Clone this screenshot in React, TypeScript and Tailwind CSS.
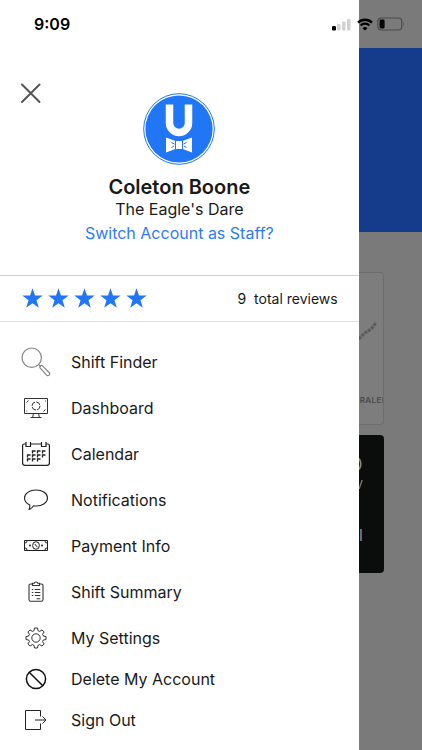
import type { ReactNode } from "react";

interface MenuItem {
    label: string;
    icon: ReactNode;
    compact?: boolean;
}

const SearchIcon = () => (
    <svg width="30" height="30" viewBox="0 0 30 30" fill="none" stroke="#858585" strokeWidth="1.2">
        <circle cx="10.7" cy="10.7" r="9.7" />
        <path d="M17.6 17.6l2.2 2.2" />
        <path d="M19.3 21.2a1.6 1.6 0 0 1 2.2-2.3l6.6 6.6a1.8 1.8 0 0 1-2.5 2.6z" />
    </svg>
);

const MonitorIcon = () => (
    <svg width="30" height="30" viewBox="0 0 30 30" fill="none" stroke="#333" strokeWidth="1">
        <path d="M3.5 5.5h23v15h-23z" />
        <path d="M12.5 20.5l-.8 3.5M17.5 20.5l.8 3.5M9.5 24.5h11" />
        <circle cx="15" cy="13" r="4" strokeDasharray="5 1.2" />
        <path d="M5.5 9.5l2-2M22.5 18.5l2-2" />
        <path d="M24 8h.8M5.5 18h.8" />
    </svg>
);

const CalendarIcon = () => (
    <svg width="30" height="30" viewBox="0 0 30 30" fill="none" stroke="#222" strokeWidth="1.2">
        <path d="M5 5H3.3Q1.6 5 1.6 6.8V24q0 2.4 2.4 2.4h22q2.4 0 2.4-2.4V6.8Q28.4 5 26.7 5H25M10 5h10" />
        <path d="M5 3v4.5h4.5V3M20.5 3v4.5H25V3" />
        <path d="M11.5 14.5v-2.500h3M16.5 14.5v-2.500h3M21.5 14.5v-2.500h3" strokeWidth="1.3" />
        <path d="M6.5 18.5v-2.500h3M11.5 18.5v-2.500h3M16.5 18.5v-2.500h3M21.5 18.5v-2.500h3" strokeWidth="1.3" />
        <path d="M6.5 22.5v-2.500h3M11.5 22.5v-2.500h3M16.5 22.5v-2.500h3" strokeWidth="1.3" />
    </svg>
);

const BubbleIcon = () => (
    <svg width="30" height="30" viewBox="0 0 30 30" fill="none" stroke="#222" strokeWidth="1.1" strokeLinejoin="round">
        <path d="M15 5C8.5 5 3.5 8.6 3.5 13c0 3 2 5.5 5.3 6.9.2 1.8-.1 3.3-.8 4.6 2-.7 3.6-2 4.6-3.7.8.1 1.6.2 2.4.2 6.5 0 11.5-3.5 11.5-8S21.5 5 15 5z" />
    </svg>
);

const BanknoteIcon = () => (
    <svg width="30" height="30" viewBox="0 0 30 30" fill="none" stroke="#222" strokeWidth="1">
        <path d="M3.5 9.5h23v10h-23z" />
        <path d="M4 12q2 0 2-2M4 17q2 0 2 2M26 12q-2 0-2-2M26 17q-2 0-2 2" />
        <ellipse cx="15" cy="14.5" rx="3.4" ry="3.8" />
        <path d="M13.8 13l2.6 3.2" />
        <circle cx="9" cy="14.5" r="1" fill="#222" stroke="none" />
        <circle cx="21" cy="14.5" r="1" fill="#222" stroke="none" />
    </svg>
);

const ClipboardIcon = () => (
    <svg width="30" height="30" viewBox="0 0 30 30" fill="none" stroke="#333" strokeWidth="1.1">
        <path d="M11 7H9.5Q8 7 8 8.5v14q0 1.8 1.6 1.8h10.8q1.6 0 1.6-1.8v-14Q22 7 20.5 7H19" />
        <path d="M11.5 8.5V6.3h1.7Q13.5 5 15 5t1.8 1.3h1.7v2.2z" />
        <path d="M10.8 12.5h1.5M10.8 15.5h1.5M10.8 18.5h1.5M13.8 12.5h5.5M13.8 15.5h5.5M13.8 18.5h5.5M15.5 21.7h3.8" />
    </svg>
);

const GearIcon = () => (
    <svg width="30" height="30" viewBox="0 0 30 30" fill="none" stroke="#333" strokeWidth="1" strokeLinejoin="round">
        <circle cx="15" cy="15" r="4.2" />
        <path d="M13.5 5h3l.5 2.7 1.7.7L21 6.9 23.1 9l-1.5 2.3.7 1.7 2.7.5v3l-2.7.5-.7 1.7 1.5 2.3-2.1 2.1-2.3-1.5-1.7.7-.5 2.7h-3l-.5-2.7-1.7-.7L9 23.1 6.9 21l1.5-2.3-.7-1.7L5 16.5v-3l2.7-.5.7-1.7L6.9 9 9 6.9l2.3 1.5 1.7-.7z" />
    </svg>
);

const BanIcon = () => (
    <svg width="30" height="30" viewBox="0 0 30 30" fill="none" stroke="#111" strokeWidth="1.5">
        <circle cx="15" cy="15" r="9.6" />
        <path d="M8.2 8.2l13.6 13.6" />
    </svg>
);

const SignOutIcon = () => (
    <svg width="30" height="30" viewBox="0 0 30 30" fill="none" stroke="#222" strokeWidth="1">
        <path d="M19.5 11.5v-6h-15v19h15v-6" />
        <path d="M14 15h11M21.5 11.5L25 15l-3.5 3.5" />
    </svg>
);

const menuItems: MenuItem[] = [
    { label: "Shift Finder", icon: <SearchIcon /> },
    { label: "Dashboard", icon: <MonitorIcon /> },
    { label: "Calendar", icon: <CalendarIcon /> },
    { label: "Notifications", icon: <BubbleIcon /> },
    { label: "Payment Info", icon: <BanknoteIcon /> },
    { label: "Shift Summary", icon: <ClipboardIcon /> },
    { label: "My Settings", icon: <GearIcon /> },
    { label: "Delete My Account", icon: <BanIcon />, compact: true },
    { label: "Sign Out", icon: <SignOutIcon /> },
];

const StatusBar = () => (
    <div className="absolute inset-x-0 top-0 z-10 flex h-12 items-center justify-between pr-4 pl-[34px]">
        <span className="text-base font-semibold text-black">9:09</span>
        <div className="flex items-center gap-1">
            <svg width="21" height="14" viewBox="0 0 21 14">
                <rect x="0" y="9" width="4" height="4.5" rx="1.2" fill="#000" />
                <rect x="5" y="7" width="3.5" height="6.5" rx="1" fill="#d2d2d2" />
                <rect x="10" y="4.5" width="3.5" height="9" rx="1" fill="#d2d2d2" />
                <rect x="15" y="2" width="3.5" height="11.5" rx="1" fill="#d2d2d2" />
            </svg>
            <svg width="16" height="13" viewBox="0 0 16 13" fill="none" stroke="#000" strokeWidth="2.3">
                <path d="M1 4.6a10 10 0 0 1 14 0" />
                <path d="M3.6 7.5a6.3 6.3 0 0 1 8.8 0" />
                <path d="M8 12.6L5.6 10.2a3.4 3.4 0 0 1 4.8 0z" fill="#000" stroke="none" />
            </svg>
            <svg width="29" height="14" viewBox="0 0 29 14">
                <rect x="0.8" y="1" width="24" height="12" rx="3.5" fill="none" stroke="#4b4b4b" strokeWidth="1.2" />
                <rect x="2.6" y="2.6" width="5" height="8.8" rx="1.4" fill="#000" />
                <path d="M26.2 5q1.6 2 0 4z" fill="#4b4b4b" />
            </svg>
        </div>
    </div>
);

const Logo = () => (
    <svg width="72" height="72" viewBox="0 0 72 72">
        <circle cx="36" cy="36" r="35.3" fill="#fff" stroke="#2176f5" strokeWidth="1" />
        <circle cx="36" cy="36" r="33.6" fill="#2176f5" />
        <path d="M26.5 11.5v18.5a9.5 9.5 0 0 0 19 0v-18.5" fill="none" stroke="#fff" strokeWidth="7.5" />
        <path d="M23 44.5l9.5 3.5h7l9.5-3.5v15l-9.5-3.5h-7l-9.5 3.5z" fill="#fff" />
        <path d="M32.5 48v8.5M39.5 48v8.5M28.5 49.5l3 1.5M28.5 54.5l2.5-1.5M43.5 49.5l-3 1.5M43.5 54.5l-2.5-1.5" stroke="#2176f5" strokeWidth="1" />
    </svg>
);

const Drawer = () => (
    <aside className="w-[85%] shrink-0 bg-white">
        <header className="relative flex flex-col items-center border-b border-[#cfcfcf] pt-[93px] pb-[30px]">
            <button type="button" aria-label="Close menu" className="absolute top-[83px] left-5 cursor-pointer">
                <svg width="21" height="21" viewBox="0 0 21 21" stroke="#555559" strokeWidth="2" strokeLinecap="round">
                    <path d="M2 1.5l17.5 17.5M19.5 1.5L2 19" />
                </svg>
            </button>
            <Logo />
            <h1 className="mt-2 text-xl leading-7 font-semibold">Coleton Boone</h1>
            <p className="text-base leading-4">The Eagle's Dare</p>
            <a href="#staff" className="mt-1 text-base leading-6 text-[#2f7bf0]">
                Switch Account as Staff?
            </a>
        </header>

        <section className="flex h-[46px] items-center justify-between border-b border-[#e2e2e2] pr-[21px] pl-[22px]">
            <div className="flex gap-[5px]">
                {[...Array(5)].map((_, i) => (
                    <svg key={i} width="21" height="21" viewBox="0 0 21 21" fill="#2176f5">
                        <path d="M10.5.3l2.5 7.3h7.7l-6.2 4.6 2.3 7.5-6.3-4.5-6.3 4.5 2.3-7.5L.3 7.6H8z" />
                    </svg>
                ))}
            </div>
            <p className="text-sm whitespace-pre">9  total reviews</p>
        </section>

        <nav className="pt-[17px]">
            <ul>
                {menuItems.map((item) => (
                    <li key={item.label}>
                        <a
                            href="#menu"
                            className={`flex items-center gap-5 pl-[21px] text-base ${item.compact ? "h-9" : "h-[46px]"}`}
                        >
                            {item.icon}
                            {item.label}
                        </a>
                    </li>
                ))}
            </ul>
        </nav>
    </aside>
);

// dimmed page that stays visible beside the open drawer
const PageBehind = () => (
    <main className="min-w-0 flex-1 overflow-hidden bg-[#7a7a7a] pt-12">
        <div className="h-[184px] bg-[#143c8b]" />
        <div className="mt-10 mr-[38px] flex h-[153px] flex-col justify-between overflow-hidden rounded-r border border-l-0 border-[#6d6d6d] bg-[#7d7d7d] pt-11 pb-4">
            <svg width="20" height="30" viewBox="0 0 20 30" fill="none">
                <path d="M0 22q4-5 9-8t8-9" stroke="#5a5a5a" strokeWidth="3" strokeDasharray="3 1" />
            </svg>
            <span className="pl-px text-[8px] leading-4 font-semibold tracking-wider text-[#494949]">RALEI</span>
        </div>
        <div className="mt-[10px] mr-[38px] h-[138px] overflow-hidden rounded-r bg-[#0b0c0c] pt-5 text-[#8a8a8a]">
            <p className="-ml-[10px] text-lg leading-5">O</p>
            <p className="-ml-1 text-xs leading-5">V</p>
            <p className="mt-7 text-base leading-6">I</p>
        </div>
    </main>
);

export default function App() {
    return (
        <div className="relative flex min-h-screen overflow-hidden bg-white font-['Inter',sans-serif] text-[#1a1a1a]">
            <StatusBar />
            <Drawer />
            <PageBehind />
        </div>
    );
}
